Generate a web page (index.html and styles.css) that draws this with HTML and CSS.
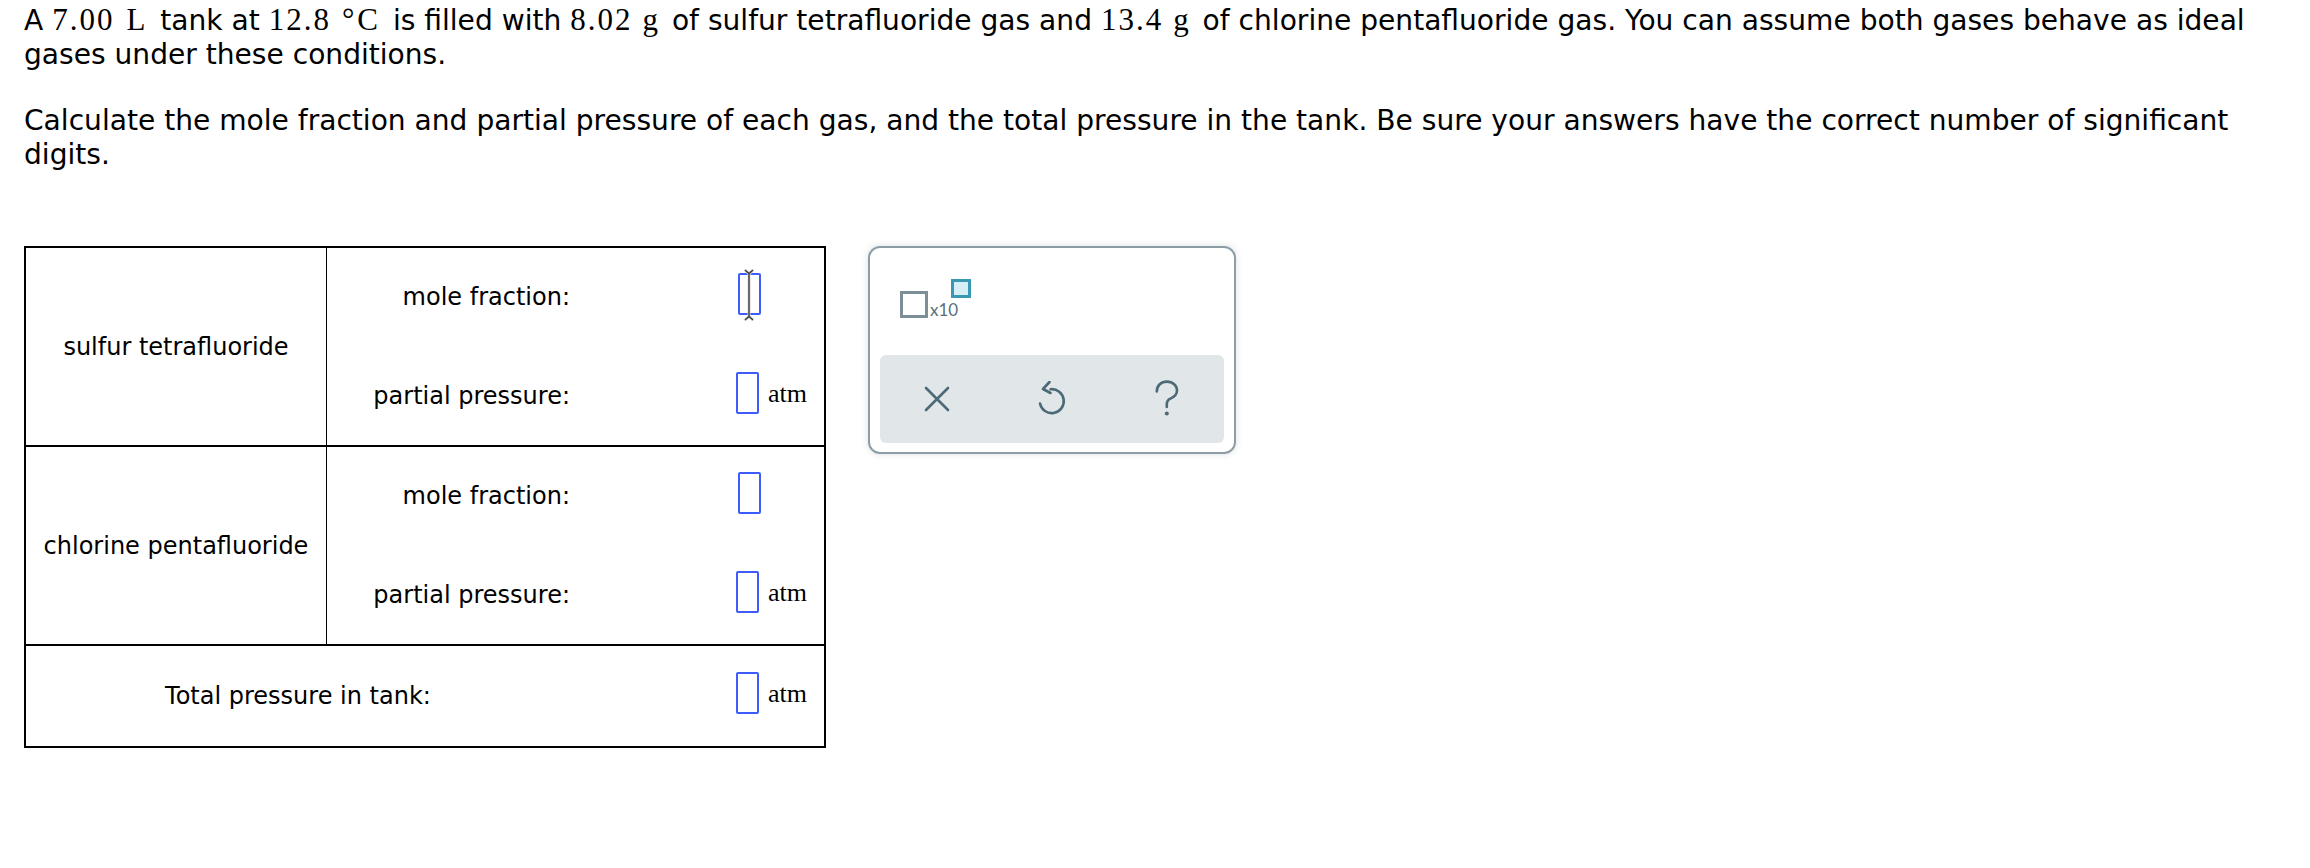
FILE: index.html
```html
<!DOCTYPE html>
<html lang="en">
<head>
<meta charset="utf-8">
<title>Mole fraction and partial pressure</title>
<link rel="stylesheet" href="styles.css">
</head>
<body>
<div class="page">
  <p class="q">A <span class="m">7.00</span><span class="m unit u-l">L</span> tank at <span class="m">12.8</span><span class="m unit u-c"><span class="deg">°</span>C</span> is filled with <span class="m">8.02</span><span class="m unit u-g">g</span> of sulfur tetrafluoride gas and <span class="m">13.4</span><span class="m unit u-g">g</span> of chlorine pentafluoride gas. You can assume both gases behave as ideal <span class="tail">gases under these conditions.</span></p>
  <p class="q">Calculate the mole fraction and partial pressure of each gas, and the total pressure in the tank. Be sure your answers have the correct number of significant digits.</p>

  <div class="work">
    <div class="answer-table">
      <div class="gas-row">
        <div class="gas-name">sulfur tetrafluoride</div>
        <div class="gas-fields">
          <div class="field">
            <div class="label">mole fraction:</div>
            <div class="entry entry-nounit">
              <span class="box box-focus">
                <svg class="ibeam" width="12" height="52" viewBox="0 0 12 52"><path d="M2.5 1.5 L6 4.5 L9.5 1.5 M6 4.5 V47.5 M2.5 50.5 L6 47.5 L9.5 50.5" fill="none" stroke="#d9d9d9" stroke-width="3" stroke-linecap="round"/><path d="M2.5 1.5 L6 4.5 L9.5 1.5 M6 4.5 V47.5 M2.5 50.5 L6 47.5 L9.5 50.5" fill="none" stroke="#3a3a3a" stroke-width="1.4" stroke-linecap="round"/></svg>
              </span>
            </div>
          </div>
          <div class="field">
            <div class="label">partial pressure:</div>
            <div class="entry"><span class="box"></span><span class="unit-text">atm</span></div>
          </div>
        </div>
      </div>
      <div class="gas-row">
        <div class="gas-name">chlorine pentafluoride</div>
        <div class="gas-fields">
          <div class="field">
            <div class="label">mole fraction:</div>
            <div class="entry entry-nounit"><span class="box"></span></div>
          </div>
          <div class="field">
            <div class="label">partial pressure:</div>
            <div class="entry"><span class="box"></span><span class="unit-text">atm</span></div>
          </div>
        </div>
      </div>
      <div class="total-row">
        <div class="total-label">Total pressure in tank:</div>
        <div class="entry"><span class="box"></span><span class="unit-text">atm</span></div>
      </div>
    </div>

    <div class="tool-panel">
      <div class="sci">
        <span class="sci-base"></span>
        <span class="sci-text">x10</span>
        <span class="sci-exp"></span>
      </div>
      <div class="tool-bar">
        <button class="tool-btn" aria-label="Clear">
          <svg width="26" height="26" viewBox="0 0 26 26"><path d="M2 2 L24 24 M24 2 L2 24" stroke="#4b6976" stroke-width="2.6" stroke-linecap="round" fill="none"/></svg>
        </button>
        <button class="tool-btn" aria-label="Undo">
          <svg width="30" height="36" viewBox="0 0 30 36"><path d="M13.5 8.2 A12 12 0 1 1 3 22.5" stroke="#4b6976" stroke-width="2.6" stroke-linecap="round" fill="none"/><path d="M12.5 1 L6 8 L13.5 12" stroke="#4b6976" stroke-width="2.6" stroke-linecap="round" stroke-linejoin="round" fill="none"/></svg>
        </button>
        <button class="tool-btn" aria-label="Help">
          <svg width="26" height="38" viewBox="0 0 26 38"><path d="M2.8 11.5 C2.8 5.5 7.2 1.6 12.8 1.6 C18.8 1.6 23 5.6 23 10.6 C23 15 19.8 17.2 16.4 18.6 C13.8 19.7 12.8 21.3 12.8 24.2 V27" stroke="#4b6976" stroke-width="2.6" stroke-linecap="round" fill="none"/><circle cx="12.8" cy="33.4" r="2" fill="#4b6976"/></svg>
        </button>
      </div>
    </div>
  </div>
</div>
</body>
</html>
```
FILE: styles.css
```css
html, body {
  margin: 0;
  padding: 0;
  background: #ffffff;
}

.page {
  padding: 4px 24px 0 24px;
  font-family: "DejaVu Sans", Verdana, sans-serif;
  font-size: 24px;
  color: #000;
}

.q {
  margin: 0 0 32px 0;
  font-size: 28.1px;
  line-height: 34px;
}

.m {
  font-family: "Liberation Serif", "Times New Roman", serif;
  font-size: 31px;
  line-height: 1;
  letter-spacing: 2px;
}

.unit {
  letter-spacing: 0;
}

.deg {
  letter-spacing: 3px;
}

.u-l {
  margin-left: 12px;
  margin-right: 6px;
}

.u-c {
  margin-left: 11px;
  margin-right: 6px;
}

.u-g {
  margin-left: 10px;
  margin-right: 5px;
}

.work {
  display: flex;
  align-items: flex-start;
  margin-top: 74px;
}

/* ---------- answer table ---------- */
.answer-table {
  width: 802px;
  border: 2px solid #000;
  box-sizing: border-box;
}

.gas-row {
  display: flex;
  height: 199px;
  border-bottom: 2px solid #000;
  box-sizing: border-box;
}

.gas-name {
  width: 301px;
  box-sizing: border-box;
  border-right: 1.5px solid #000;
  display: flex;
  align-items: center;
  justify-content: center;
}

.gas-fields {
  flex: 1;
  display: flex;
  flex-direction: column;
}

.field {
  flex: 1;
  display: flex;
  align-items: center;
}

.label {
  width: 243px;
  text-align: right;
}

.entry {
  display: flex;
  align-items: center;
  padding-left: 166px;
}

.entry-nounit {
  padding-left: 168px;
}

.box {
  position: relative;
  display: block;
  width: 23px;
  height: 42px;
  box-sizing: border-box;
  border: 2px solid #3d5cfb;
  border-radius: 2px;
  margin-bottom: 6px;
}

.ibeam {
  position: absolute;
  left: 3px;
  top: -6px;
}

.unit-text {
  font-family: "Liberation Serif", "Times New Roman", serif;
  font-size: 26px;
  margin-left: 9px;
  margin-bottom: 4px;
}

.total-row {
  display: flex;
  align-items: center;
  height: 100px;
}

.total-label {
  width: 544px;
  text-align: center;
}

/* ---------- tool panel ---------- */
.tool-panel {
  margin-left: 42px;
  width: 368px;
  height: 208px;
  box-sizing: border-box;
  border: 2px solid #8c9da6;
  border-radius: 12px;
  box-shadow: 0 0 7px rgba(60, 80, 90, 0.18);
  background: #fff;
  display: flex;
  flex-direction: column;
  justify-content: space-between;
  padding: 31px 10px 9px 10px;
}

.sci {
  display: flex;
  align-items: flex-start;
  padding-left: 20px;
  height: 40px;
}

.sci-base {
  width: 28px;
  height: 27px;
  box-sizing: border-box;
  border: 3px solid #7c8f99;
  margin-top: 12px;
}

.sci-text {
  font-family: "Lato", "Open Sans", sans-serif;
  font-size: 17px;
  line-height: 17px;
  color: #5a707a;
  margin-left: 2px;
  margin-top: 22px;
}

.sci-exp {
  width: 20px;
  height: 19px;
  box-sizing: border-box;
  border: 3px solid #3a98b4;
  background: #d6eff5;
  margin-left: -7px;
}

.tool-bar {
  height: 88px;
  background: #e1e6e9;
  border-radius: 6px;
  display: flex;
}

.tool-btn {
  flex: 1;
  border: 0;
  background: transparent;
  padding: 0;
  display: flex;
  align-items: center;
  justify-content: center;
}
```
